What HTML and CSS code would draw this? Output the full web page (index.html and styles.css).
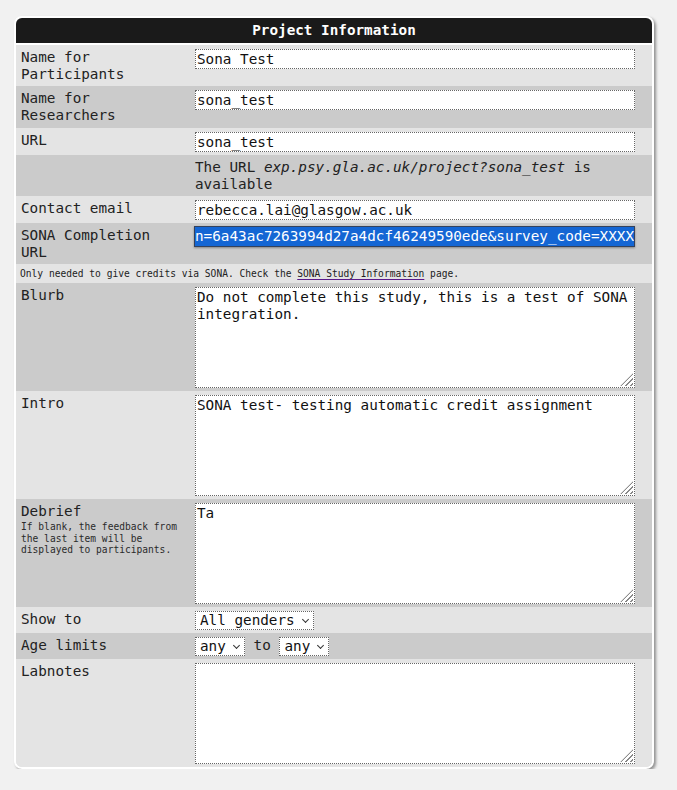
FILE: index.html
```html
<!DOCTYPE html>
<html lang="en">
<head>
<meta charset="utf-8">
<title>Project Information</title>
<link rel="stylesheet" href="styles.css">
</head>
<body>
<div class="panel">
  <div class="title">Project Information</div>

  <div class="row light">
    <div class="label">Name for Participants</div>
    <div class="field"><input class="txt" type="text" value="Sona Test"></div>
  </div>

  <div class="row dark">
    <div class="label">Name for Researchers</div>
    <div class="field"><input class="txt" type="text" value="sona_test"></div>
  </div>

  <div class="row light">
    <div class="label">URL</div>
    <div class="field"><input class="txt" type="text" value="sona_test"></div>
  </div>

  <div class="row dark">
    <div class="label"></div>
    <div class="info">The URL <em>exp.psy.gla.ac.uk/project?sona_test</em> is available</div>
  </div>

  <div class="row light">
    <div class="label">Contact email</div>
    <div class="field"><input class="txt" type="text" value="rebecca.lai@glasgow.ac.uk"></div>
  </div>

  <div class="row dark">
    <div class="label">SONA Completion URL</div>
    <div class="field"><input class="txt selected" type="text" value="n=6a43ac7263994d27a4dcf46249590ede&amp;survey_code=XXXX"></div>
  </div>

  <div class="notice light">Only needed to give credits via SONA. Check the <a class="lnk" href="#">SONA Study Information</a> page.</div>

  <div class="row dark">
    <div class="label">Blurb</div>
    <div class="field"><div class="ta-wrap"><textarea class="ta">Do not complete this study, this is a test of SONA integration.</textarea></div></div>
  </div>

  <div class="row light">
    <div class="label">Intro</div>
    <div class="field"><div class="ta-wrap"><textarea class="ta">SONA test- testing automatic credit assignment</textarea></div></div>
  </div>

  <div class="row dark">
    <div class="label">Debrief
      <div class="hint">If blank, the feedback from the last item will be displayed to participants.</div>
    </div>
    <div class="field"><div class="ta-wrap"><textarea class="ta">Ta</textarea></div></div>
  </div>

  <div class="row light">
    <div class="label">Show to</div>
    <div class="field"><span class="sel"><select><option>All genders</option><option>Female</option><option>Male</option></select></span></div>
  </div>

  <div class="row dark">
    <div class="label">Age limits</div>
    <div class="field"><span class="sel"><select><option>any</option><option>18</option><option>21</option></select></span> to <span class="sel"><select><option>any</option><option>30</option><option>65</option></select></span></div>
  </div>

  <div class="row light">
    <div class="label">Labnotes</div>
    <div class="field"><div class="ta-wrap"><textarea class="ta"></textarea></div></div>
  </div>
</div>
</body>
</html>
```

FILE: styles.css
```css
* {
  box-sizing: border-box;
}

html,
body {
  margin: 0;
  background: #f1f1f1;
}

body {
  font-family: "DejaVu Sans Mono", "Liberation Mono", monospace;
  font-size: 14.3px;
  line-height: 1.2;
  color: #222;
}

.panel {
  width: 640px;
  margin: 16px 0 0 14px;
  border: 2px solid #fff;
  border-radius: 8px;
  overflow: hidden;
  background: #e4e4e4;
  box-shadow: 2px 2px 3px rgba(0, 0, 0, 0.4);
}

.title {
  height: 27px;
  line-height: 25px;
  background: #1a1a1a;
  border-bottom: 2px solid #fff;
  color: #fff;
  font-weight: bold;
  text-align: center;
}

.row {
  display: grid;
  grid-template-columns: 179px 1fr;
}

.light {
  background: #e4e4e4;
}

.dark {
  background: #cbcbcb;
}

.label {
  padding: 4px 14px 3px 5px;
}

.field {
  padding: 4px 0 3px;
}

.info {
  padding: 4px 0 3px;
}

.info em {
  font-style: italic;
}

.hint {
  padding-top: 1px;
  font-size: 9.6px;
  line-height: 11.5px;
  color: #2a2a2a;
}

.notice {
  padding: 4px 4px 3px;
  font-size: 9.6px;
  line-height: 12px;
}

.lnk {
  color: #222;
  text-decoration: underline;
  text-decoration-color: #5a1a8a;
  text-underline-offset: 2px;
}

.txt {
  display: block;
  width: 440px;
  height: 20px;
  margin: 0;
  padding: 0 1px;
  border: 1px dotted #666;
  border-radius: 0;
  background: #fff;
  color: #111;
  font-family: inherit;
  font-size: 14.3px;
  line-height: 20px;
  outline: none;
}

.txt.selected {
  width: 441px;
  height: 21px;
  margin: -1px 0 0 -1px;
  padding: 0;
  direction: rtl;
  border: 1px solid #34425c;
  background: #1466d4;
  color: #fff;
  line-height: 21px;
  box-shadow: 0 1px 2px rgba(0, 0, 0, 0.35);
}

.ta-wrap {
  position: relative;
  width: 440px;
}

.ta {
  display: block;
  width: 440px;
  height: 101px;
  margin: 0;
  padding: 1px 1px;
  border: 1px dotted #666;
  border-radius: 0;
  background: #fff;
  color: #111;
  font: inherit;
  resize: none;
  outline: none;
}

.ta-wrap::after {
  content: "";
  position: absolute;
  right: 2px;
  bottom: 2px;
  width: 13px;
  height: 13px;
  background: repeating-linear-gradient(135deg, transparent 0 2px, #8a8a8a 2px 3.5px);
  clip-path: polygon(100% 0, 100% 100%, 0 100%);
  pointer-events: none;
}

.sel {
  position: relative;
  display: inline-block;
  vertical-align: top;
}

.sel select {
  -webkit-appearance: none;
  appearance: none;
  display: block;
  height: 19px;
  margin: 0;
  padding: 0 18px 0 4px;
  border: 1px dotted #666;
  border-radius: 0;
  background: #fff;
  color: #111;
  font: inherit;
  line-height: 17px;
  outline: none;
}

.sel::after {
  content: "";
  position: absolute;
  right: 6px;
  top: 6px;
  width: 4px;
  height: 4px;
  border-right: 1px solid #333;
  border-bottom: 1px solid #333;
  transform: rotate(45deg);
  pointer-events: none;
}
```
